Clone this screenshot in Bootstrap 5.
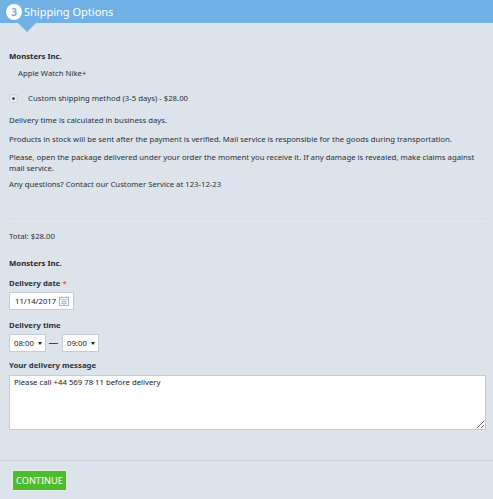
<!DOCTYPE html>
<html lang="en">
<head>
<meta charset="utf-8">
<title>Shipping Options</title>
<link rel="stylesheet" href="https://cdn.jsdelivr.net/npm/bootstrap@5.3.0/dist/css/bootstrap.min.css">
<style>
html,body{height:100%;}
body{background:#dce3eb;font-family:"Noto Sans","Open Sans",sans-serif;font-size:7.75px;color:#2a3038;line-height:11px;overflow:hidden;}
.step-head{background:#6fb1e4;height:23px;color:#fff;font-size:11px;line-height:23px;padding-left:6px;position:relative;gap:2px;}
.step-head::after{content:"";position:absolute;left:18px;top:23px;border-style:solid;border-width:9px 9.5px 0 9.5px;border-color:#6fb1e4 transparent transparent transparent;}
.step-num{width:16px;height:16px;background:#fff;border-radius:50%;color:#6fb1e4;font-weight:700;font-size:10px;line-height:16px;text-align:center;flex:none;}
.step-body{padding:0 7px 0 9px;}
.vendor{font-weight:700;color:#1f2630;}
.v1{padding-top:28px;}
.prod{padding:6px 0 0 9px;}
.ship{padding-top:14px;align-items:center;}
.radio-dot{border-radius:50%;background:#4a4f57;border:2px solid #eef1f4;box-shadow:0 0 0 1px #c3ccd7;flex:none;margin:0 11px 0 1px;box-sizing:content-box;width:3px;height:3px;}
.para{margin:0;}
.p1{padding-top:11px;}
.p2{padding-top:8px;}
.p3{padding-top:7px;}
.p4{padding-top:5px;}
.sep{border:0;border-top:1px solid #e4e9ef;opacity:1;margin:31px 0 0;}
.total{padding-top:9px;}
.v2{padding-top:16px;}
.field-label{font-weight:700;color:#2b3340;display:block;margin:0;}
.lab-a{margin-top:9px;}
.lab-b{margin-top:10px;}
.lab-c{margin-top:8px;}
.req{color:#e8693a;}
.date-box{width:65px;height:18px;background:#fff;border:1px solid #c2ccd8;margin-top:3px;padding-left:5px;line-height:16px;color:#222;gap:3px;}
.time-row{margin-top:3px;}
.sel-box{width:37px;height:18px;padding:0 3px 0 4px;line-height:16px;color:#222;background:#fff;border:1px solid #c2ccd8;}
.sel-box i{border-style:solid;border-width:3px 2px 0 2px;border-color:#222 transparent transparent transparent;}
.dash{width:9px;height:1px;background:#444;margin:0 4px 0 3px;}
.msg-box{width:100%;height:55px;background:#fff;border:1px solid #c2ccd8;margin-top:4px;padding:1px 4px;line-height:11px;color:#222;border-radius:0;font-family:inherit;font-size:inherit;display:block;}
.msg-box:focus{outline:0;box-shadow:none;border-color:#c2ccd8;}
.foot-rule{border-top:1px solid #c8d1dc;margin-top:30px;padding:9px 0 0 12px;}
.go-btn{display:block;background:#4dbd2f;color:#fff;border:1px solid #e3f0e0;border-radius:0;font-size:9.2px;line-height:19px;height:21px;width:55px;padding:0;text-align:center;}
</style>
</head>
<body>
<div class="step-head d-flex align-items-center"><span class="step-num">3</span><span>Shipping Options</span></div>
<div class="step-body">
<div class="vendor v1">Monsters Inc.</div>
<div class="prod">Apple Watch Nike+</div>
<div class="d-flex ship"><span class="radio-dot"></span><span>Custom shipping method (3-5 days) - $28.00</span></div>
<p class="para p1">Delivery time is calculated in business days.</p>
<p class="para p2">Products in stock will be sent after the payment is verified. Mail service is responsible for the goods during transportation.</p>
<p class="para p3">Please, open the package delivered under your order the moment you receive it. If any damage is revealed, make claims against mail service.</p>
<p class="para p4">Any questions? Contact our Customer Service at 123-12-23</p>
<hr class="sep">
<div class="total">Total: $28.00</div>
<div class="vendor v2">Monsters Inc.</div>
<label class="field-label lab-a">Delivery date <span class="req">*</span></label>
<div class="date-box d-flex align-items-center"><span>11/14/2017</span>
<svg width="10" height="10" viewBox="0 0 10 10" fill="none" stroke="#9db4cc" stroke-width="1"><rect x="0.5" y="1.5" width="9" height="8"/><path d="M0.5 3.5h9M2.5 0v2M7.5 0v2M2 5.5h6M2 7.5h6M4 4v5M6 4v5" stroke-width=".7"/></svg></div>
<label class="field-label lab-b">Delivery time</label>
<div class="d-flex align-items-center time-row">
<div class="sel-box d-flex justify-content-between align-items-center"><span>08:00</span><i></i></div><span class="dash"></span>
<div class="sel-box d-flex justify-content-between align-items-center"><span>09:00</span><i></i></div></div>
<label class="field-label lab-c">Your delivery message</label>
<textarea class="msg-box">Please call +44 569 78 11 before delivery</textarea>
</div>
<div class="foot-rule"><button type="button" class="btn go-btn">CONTINUE</button></div>
</body>
</html>
